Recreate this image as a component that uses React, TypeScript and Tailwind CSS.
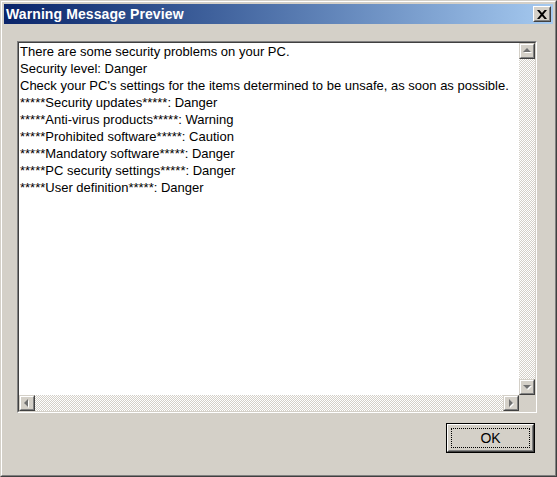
import React from "react";

const lines = [
  "There are some security problems on your PC.",
  "Security level: Danger",
  "Check your PC's settings for the items determined to be unsafe, as soon as possible.",
  "*****Security updates*****: Danger",
  "*****Anti-virus products*****: Warning",
  "*****Prohibited software*****: Caution",
  "*****Mandatory software*****: Danger",
  "*****PC security settings*****: Danger",
  "*****User definition*****: Danger",
];

function ArrowButton({ dir }: { dir: "up" | "down" | "left" | "right" }) {
  const pts: Record<string, string> = {
    up: "4,9 8,5 12,9",
    down: "4,6 8,10 12,6",
    left: "9,4 5,8 9,12",
    right: "6,4 10,8 6,12",
  };
  return (
    <div className="w-[16px] h-[16px] bg-[#d4d0c8] border border-t-[#d4d0c8] border-l-[#d4d0c8] border-r-[#404040] border-b-[#404040]">
      <div className="w-full h-full border border-t-white border-l-white border-r-[#808080] border-b-[#808080] relative">
        <svg width="14" height="14" viewBox="1 1 14 14" className="absolute left-[-1px] top-[-1px]">
          <polygon points={pts[dir]} fill="#ffffff" transform="translate(1,1)" />
          <polygon points={pts[dir]} fill="#707070" />
        </svg>
      </div>
    </div>
  );
}

export default function App() {
  return (
    <div
      className="w-[557px] h-[477px] bg-[#d4d0c8] border border-t-[#d4d0c8] border-l-[#d4d0c8] border-r-[#404040] border-b-[#404040]"
      style={{ fontFamily: '"Liberation Sans", Arial, sans-serif' }}
    >
      <div className="h-full border border-t-white border-l-white border-r-[#808080] border-b-[#808080] p-[2px] flex flex-col">
        {/* Title bar */}
        <div className="h-[20px] bg-linear-to-r from-[#0a246a] to-[#a6caf0] flex items-center justify-between">
          <span className="text-white font-bold text-[14px] leading-none pl-[2px] tracking-[0.1px]">
            Warning Message Preview
          </span>
          <div className="w-[18px] h-[16px] mr-[2px] bg-[#d4d0c8] border border-t-white border-l-white border-r-[#404040] border-b-[#404040]">
            <div className="w-full h-full border border-t-[#d4d0c8] border-l-[#d4d0c8] border-r-[#808080] border-b-[#808080] flex items-center justify-center">
              <svg width="10" height="9" viewBox="0 0 10 9">
                <path d="M0 0h2.4l2.6 3 2.6-3H10L6.3 4.5 10 9H7.6L5 6 2.4 9H0l3.7-4.5z" fill="#000" />
              </svg>
            </div>
          </div>
        </div>

        {/* Edit box */}
        <div className="ml-[13px] mt-[17px] w-[520px] h-[372px] border border-t-[#808080] border-l-[#808080] border-r-white border-b-white">
          <div className="w-full h-full border border-t-[#404040] border-l-[#404040] border-r-[#d4d0c8] border-b-[#d4d0c8] grid grid-cols-[1fr_16px] grid-rows-[1fr_16px]">
            <div className="bg-white text-black text-[13px] leading-[17px] pl-[1px] pt-[0px] overflow-hidden whitespace-nowrap">
              {lines.map((l, i) => (
                <div key={i}>{l}</div>
              ))}
            </div>
            <div className="flex flex-col">
              <ArrowButton dir="up" />
              <div className="flex-1 bg-[image:repeating-conic-gradient(#d4d0c8_0_25%,#ffffff_0_50%)] bg-[length:2px_2px]" />
              <ArrowButton dir="down" />
            </div>
            <div className="flex flex-row">
              <ArrowButton dir="left" />
              <div className="flex-1 bg-[image:repeating-conic-gradient(#d4d0c8_0_25%,#ffffff_0_50%)] bg-[length:2px_2px]" />
              <ArrowButton dir="right" />
            </div>
            <div className="bg-[#d4d0c8]" />
          </div>
        </div>

        {/* Button row */}
        <div className="flex justify-end mt-[10px] pr-[18px]">
          <button className="w-[89px] h-[30px] border border-black bg-[#d4d0c8] p-0">
            <div className="w-full h-full border border-t-white border-l-white border-r-[#404040] border-b-[#404040]">
              <div className="w-full h-full border border-t-[#d4d0c8] border-l-[#d4d0c8] border-r-[#808080] border-b-[#808080] p-[2px]">
                <div className="w-full h-full border border-dotted border-black flex items-center justify-center text-[14px] text-black leading-none">
                  OK
                </div>
              </div>
            </div>
          </button>
        </div>
      </div>
    </div>
  );
}
